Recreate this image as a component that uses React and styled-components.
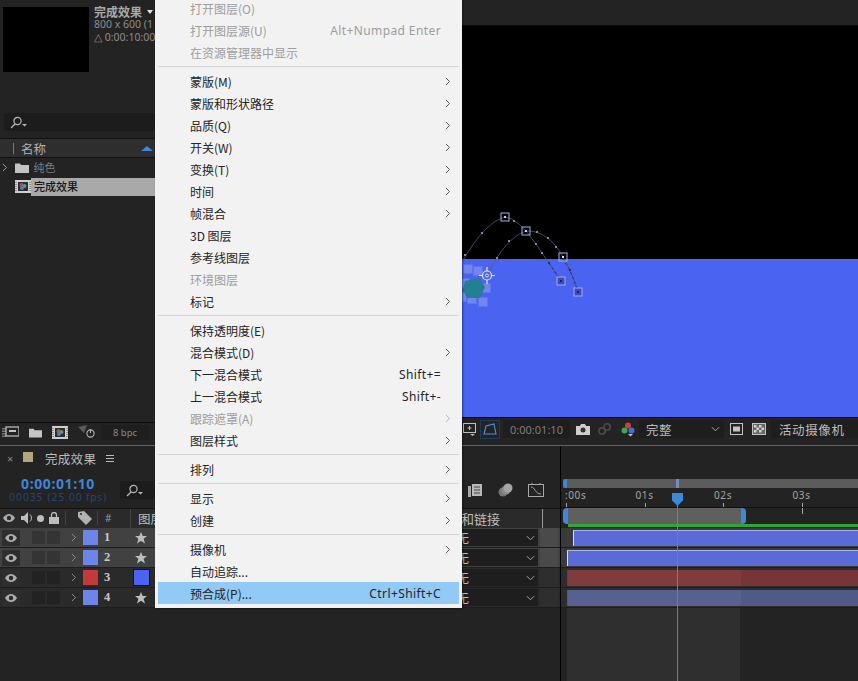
import React from "react";
import styled, { createGlobalStyle } from "styled-components";

const CJK = `"Noto Sans CJK SC", "Noto Sans", sans-serif`;

const MENU_GROUPS = [
  [
    { label: "打开图层(O)", off: true },
    { label: "打开图层源(U)", off: true, keys: "Alt+Numpad Enter" },
    { label: "在资源管理器中显示", off: true },
  ],
  [
    { label: "蒙版(M)", sub: true },
    { label: "蒙版和形状路径", sub: true },
    { label: "品质(Q)", sub: true },
    { label: "开关(W)", sub: true },
    { label: "变换(T)", sub: true },
    { label: "时间", sub: true },
    { label: "帧混合", sub: true },
    { label: "3D 图层" },
    { label: "参考线图层" },
    { label: "环境图层", off: true },
    { label: "标记", sub: true },
  ],
  [
    { label: "保持透明度(E)" },
    { label: "混合模式(D)", sub: true },
    { label: "下一混合模式", keys: "Shift+=" },
    { label: "上一混合模式", keys: "Shift+-" },
    { label: "跟踪遮罩(A)", off: true, sub: true },
    { label: "图层样式", sub: true },
  ],
  [{ label: "排列", sub: true }],
  [
    { label: "显示", sub: true },
    { label: "创建", sub: true },
  ],
  [
    { label: "摄像机", sub: true },
    { label: "自动追踪..." },
    { label: "预合成(P)...", keys: "Ctrl+Shift+C", active: true },
  ],
];

const LAYERS = [
  { n: 1, color: "#6d84e8", selected: true },
  { n: 2, color: "#6d84e8", selected: true },
  { n: 3, color: "#c43a3c", solid: true },
  { n: 4, color: "#6d84e8" },
];

const TRACKS = [
  { inset: 6, tone: "#5a6ad6", rest: "#5a6ad6", lit: true, selected: true },
  { inset: 0, tone: "#5a6ad6", rest: "#5a6ad6", lit: true, selected: true },
  { inset: 0, tone: "#823b3c", rest: "#763536" },
  { inset: 0, tone: "#566190", rest: "#4f5a86" },
];

const HANDLES = [
  [505, 217],
  [526, 231],
  [563, 257],
  [561, 281],
  [578, 292],
];

const PATH_DOTS = [
  [465, 255], [482, 233], [514, 221], [536, 244], [542, 253], [549, 263],
  [497, 258], [509, 241], [537, 232], [548, 238], [556, 247], [570, 270],
];

const SHAPE_HANDLES = [
  [468, 269], [478, 271], [465, 283], [486, 288], [462, 297], [472, 299], [483, 302],
];

function Eye() {
  return (
    <svg width="14" height="10" viewBox="0 0 14 10">
      <path d="M1 5c2-3 4-4 6-4s4 1 6 4c-2 3-4 4-6 4S3 8 1 5z" fill="#adadad" />
      <circle cx="7" cy="5" r="2.2" fill="#2b2b2b" />
    </svg>
  );
}

function Chevron({ color = "#8d8d8d", size = 9 }) {
  return (
    <svg width={size * 0.6} height={size} viewBox="0 0 6 10">
      <path d="M1 1l4 4-4 4" fill="none" stroke={color} strokeWidth="1.1" />
    </svg>
  );
}

function DownChevron() {
  return (
    <svg width="9" height="6" viewBox="0 0 10 6">
      <path d="M1 1l4 4 4-4" fill="none" stroke="#a8a8a8" strokeWidth="1.1" />
    </svg>
  );
}

function SearchIcon() {
  return (
    <svg width="17" height="13" viewBox="0 0 17 13">
      <circle cx="7.5" cy="5" r="3.6" fill="none" stroke="#b8b8b8" strokeWidth="1.2" />
      <path d="M5 8l-4 4" stroke="#b8b8b8" strokeWidth="1.3" />
      <path d="M12 8h5l-2.5 2.5z" fill="#b8b8b8" />
    </svg>
  );
}

function FolderIcon({ w = 14, h = 11 }) {
  return (
    <svg width={w} height={h} viewBox="0 0 14 11">
      <path d="M0 1.5h5l1 1.5h8v8H0z" fill="#c3c3c3" />
    </svg>
  );
}

function CompIcon() {
  return (
    <svg width="16" height="13" viewBox="0 0 16 13">
      <rect width="16" height="13" fill="#cfcfcf" />
      <rect x="3" y="2" width="10" height="9" fill="#2d2d2d" />
      <circle cx="6.5" cy="5" r="2" fill="#b84b4b" />
      <circle cx="9.5" cy="6" r="2" fill="#4fa06a" />
      <circle cx="7" cy="8" r="2" fill="#5b74c9" />
      <path d="M1 2v9M15 2v9" stroke="#555" strokeWidth="1" strokeDasharray="1 1" />
    </svg>
  );
}

function FootageIcon() {
  return (
    <svg width="17" height="12" viewBox="0 0 17 12">
      <rect x="4" y="1" width="13" height="9" fill="none" stroke="#c4c4c4" strokeWidth="1.2" />
      <rect x="7" y="4" width="7" height="2" fill="#c4c4c4" />
      <path d="M1 2v9M3 2v9" stroke="#c4c4c4" strokeDasharray="1.5 1" />
    </svg>
  );
}

function FlowIcon() {
  return (
    <svg width="18" height="14" viewBox="0 0 18 14">
      <path d="M0 2l9-2-3 8z" fill="#5a5a5a" />
      <circle cx="12.5" cy="8.5" r="3.6" fill="none" stroke="#b4b4b4" strokeWidth="1.1" />
      <path d="M12.5 4v4" stroke="#b4b4b4" strokeWidth="1.1" />
    </svg>
  );
}

function CameraIcon() {
  return (
    <svg width="14" height="11" viewBox="0 0 14 11">
      <path d="M0 2h4l1-2h4l1 2h4v9H0z" fill="#cfcfcf" />
      <circle cx="7" cy="6" r="2.5" fill="#333" />
    </svg>
  );
}

function GlassesIcon() {
  return (
    <svg width="13" height="12" viewBox="0 0 13 12">
      <circle cx="4" cy="8" r="3.2" fill="none" stroke="#4b4b4b" strokeWidth="1.6" />
      <circle cx="9" cy="4" r="3.2" fill="none" stroke="#4b4b4b" strokeWidth="1.6" />
    </svg>
  );
}

function ColorIcon() {
  return (
    <svg width="14" height="15" viewBox="0 0 14 15">
      <circle cx="7" cy="3.5" r="3" fill="#d8383a" />
      <circle cx="3.5" cy="8.5" r="3" fill="#3fa84f" />
      <circle cx="10.5" cy="8.5" r="3" fill="#3f6fd8" />
      <path d="M7 12h5l-2.5 2.5z" fill="#c4c4c4" />
    </svg>
  );
}

function MaskIcon() {
  return (
    <svg width="14" height="12" viewBox="0 0 14 12">
      <path d="M1 11l2-8 8-2 2 10z" fill="none" stroke="#4f8fdc" strokeWidth="1.1" />
    </svg>
  );
}

function SafeIcon() {
  return (
    <svg width="13" height="13" viewBox="0 0 13 13">
      <rect x="0.5" y="0.5" width="12" height="9" fill="none" stroke="#c0c0c0" />
      <path d="M6.5 3v4M4.5 5h4" stroke="#c0c0c0" />
      <path d="M7 11h5l-2.5 2z" fill="#c0c0c0" />
    </svg>
  );
}

function RegionIcon() {
  return (
    <svg width="13" height="12" viewBox="0 0 13 12">
      <rect x="0.5" y="0.5" width="12" height="11" fill="none" stroke="#c4c4c4" />
      <rect x="3" y="3.5" width="7" height="5" fill="#c4c4c4" />
    </svg>
  );
}

function CheckerIcon() {
  return (
    <svg width="14" height="12" viewBox="0 0 14 12">
      <rect x="0.5" y="0.5" width="13" height="11" fill="#666" stroke="#c4c4c4" />
      <path d="M2 2h2.5v2.5H2zM7 2h2.5v2.5H7zM4.5 4.5H7V7H4.5zM9.5 4.5H12V7H9.5zM2 7h2.5v2.5H2zM7 7h2.5v2.5H7z" fill="#d4d4d4" />
    </svg>
  );
}

function AudioIcon() {
  return (
    <svg width="12" height="12" viewBox="0 0 12 12">
      <path d="M0 4h3l4-4v12l-4-4H0z" fill="#bdbdbd" />
      <path d="M9 2.5c2 2 2 5 0 7" fill="none" stroke="#bdbdbd" />
    </svg>
  );
}

function LockIcon() {
  return (
    <svg width="10" height="12" viewBox="0 0 10 12">
      <path d="M2.5 5V3a2.5 2.5 0 0 1 5 0v2" fill="none" stroke="#bdbdbd" strokeWidth="1.3" />
      <rect y="5" width="10" height="7" fill="#bdbdbd" />
    </svg>
  );
}

function TagIcon() {
  return (
    <svg width="14" height="14" viewBox="0 0 14 14">
      <path d="M0 1l6-1 8 8-6 6-8-8z" fill="#b2b2b2" />
      <circle cx="3" cy="3" r="1.1" fill="#333" />
    </svg>
  );
}

function Star() {
  return (
    <svg width="12" height="12" viewBox="0 0 12 12">
      <path d="M6 0l1.7 4H12L8.6 6.7 10 11.5 6 8.8 2 11.5l1.4-4.8L0 4h4.3z" fill="#bdbdbd" />
    </svg>
  );
}

function TimelineTools() {
  return (
    <>
      <svg width="14" height="15" viewBox="0 0 14 15">
        <rect x="0" y="3" width="3" height="11" fill="#a8a8a8" />
        <rect x="4" y="1" width="10" height="12" fill="#b8b8b8" />
        <path d="M6 4h6M6 7h6M6 10h6" stroke="#444" />
      </svg>
      <svg width="15" height="14" viewBox="0 0 15 14">
        <circle cx="5" cy="9" r="4.5" fill="#777" />
        <circle cx="8" cy="7" r="4.5" fill="#8c8c8c" />
        <circle cx="10" cy="5" r="4.5" fill="#a5a5a5" />
      </svg>
      <svg width="16" height="14" viewBox="0 0 16 14">
        <rect x="0.5" y="1.5" width="15" height="12" fill="none" stroke="#a8a8a8" />
        <path d="M3 4c4 0 4 7 10 7" fill="none" stroke="#a8a8a8" />
        <path d="M4 0v2M12 0v2" stroke="#a8a8a8" />
      </svg>
    </>
  );
}

function MotionPaths() {
  // coordinates are page pixels, the viewBox starts at the stage corner
  return (
    <PathLayer viewBox="462 26 396 391">
      <path d="M462 262Q485 222 505 217Q518 218 536 244L561 281" fill="none" stroke="#565c6e" strokeWidth="0.8" />
      <path d="M487 276Q505 238 526 231Q548 230 563 257Q572 272 578 292" fill="none" stroke="#565c6e" strokeWidth="0.8" />
      <path d="M549 263L561 281M563 259Q572 272 578 292" fill="none" stroke="#27306e" strokeWidth="1" strokeDasharray="3 2" />
      {PATH_DOTS.map(([x, y]) => (
        <rect key={`${x}-${y}`} x={x - 1} y={y - 1} width="2" height="2" fill={y > 259 ? "#27306e" : "#8089ad"} />
      ))}
      {SHAPE_HANDLES.map(([x, y]) => (
        <rect key={`${x}-${y}`} x={x - 4.5} y={y - 4.5} width="9" height="9" fill="#7386ee" />
      ))}
      <path d="M465 281l14-3 6 9-5 11-13 0-4-8z" fill="#237f92" />
      {HANDLES.map(([x, y]) => (
        <g key={`${x}-${y}`}>
          <rect x={x - 4} y={y - 4} width="8" height="8" fill={y > 259 ? "#3c4cc0" : "none"} stroke="#a4aeea" />
          <rect x={x - 1} y={y - 1} width="2" height="2" fill={y > 259 ? "#1d2350" : "#cdd3f2"} />
        </g>
      ))}
      <circle cx="487" cy="275.5" r="4.5" fill="none" stroke="#e4e6f2" strokeWidth="1.2" />
      <circle cx="487" cy="275.5" r="1.5" fill="none" stroke="#e4e6f2" />
      <path d="M487 267v4M487 280v4M479 275.5h4M491 275.5h4" stroke="#e4e6f2" strokeWidth="1.2" />
    </PathLayer>
  );
}

export default function App() {
  return (
    <Screen>
      <GlobalStyle />
      <TopArea>
        <ProjectPanel>
          <PreviewRow>
            <Thumb />
            <CompInfo>
              <CompTitle>
                完成效果 <TitleCaret />
              </CompTitle>
              <CompMeta>800 x 600 (1</CompMeta>
              <CompMeta>△ 0:00:10:00</CompMeta>
            </CompInfo>
          </PreviewRow>
          <ProjectSearch>
            <SearchIcon />
          </ProjectSearch>
          <ProjectHeader>
            <HeaderDivider />
            <HeaderName>名称</HeaderName>
            <SortCaret />
          </ProjectHeader>
          <ProjectRow>
            <Chevron color="#9a9a9a" />
            <ProjectIcon>
              <FolderIcon />
            </ProjectIcon>
            <ItemName>纯色</ItemName>
          </ProjectRow>
          <ProjectRow>
            <ProjectIcon $shift>
              <CompIcon />
            </ProjectIcon>
            <ItemName $picked>完成效果</ItemName>
          </ProjectRow>
          <ProjectFill />
          <ProjectToolbar>
            <FootageIcon />
            <FolderIcon w={13} h={11} />
            <CompIcon />
            <FlowIcon />
            <DepthBox>8 bpc</DepthBox>
          </ProjectToolbar>
        </ProjectPanel>

        <ViewerPanel>
          <ViewerTab />
          <Stage>
            <StageBlack />
            <StageBlue />
            <MotionPaths />
          </Stage>
          <ViewerToolbar>
            <ToolSlot $left={0}>
              <SafeIcon />
            </ToolSlot>
            <MaskToggle>
              <MaskIcon />
            </MaskToggle>
            <TimeBox>0:00:01:10</TimeBox>
            <ToolSlot $left={6}>
              <CameraIcon />
            </ToolSlot>
            <ToolSlot $left={8}>
              <GlassesIcon />
            </ToolSlot>
            <ToolSlot $left={10}>
              <ColorIcon />
            </ToolSlot>
            <ResolutionBox>
              完整
              <DownChevron />
            </ResolutionBox>
            <ToolSlot $left={6}>
              <RegionIcon />
            </ToolSlot>
            <ToolSlot $left={9}>
              <CheckerIcon />
            </ToolSlot>
            <CameraBox>活动摄像机</CameraBox>
          </ViewerToolbar>
        </ViewerPanel>
      </TopArea>

      <BlueRule />

      <TimelinePanel>
        <LayerSide>
          <TabRow>
            <CloseMark>×</CloseMark>
            <TabSwatch />
            <TabName>完成效果</TabName>
            <TabBurger />
          </TabRow>
          <TimeRow>
            <TimeStack>
              <Timecode>0:00:01:10</Timecode>
              <FrameCount>00035 (25.00 fps)</FrameCount>
            </TimeStack>
            <TimeSearch>
              <SearchIcon />
            </TimeSearch>
            <TimelineToolset>
              <TimelineTools />
            </TimelineToolset>
          </TimeRow>
          <ColumnHeader>
            <SwitchIcons>
              <Eye />
              <AudioIcon />
              <HeaderDot />
              <LockIcon />
            </SwitchIcons>
            <TagCell>
              <TagIcon />
            </TagCell>
            <HashCell>#</HashCell>
            <LayerNameHead>图层名称</LayerNameHead>
            <ParentHead>父级和链接</ParentHead>
          </ColumnHeader>
          {LAYERS.map((layer) => (
            <LayerRow key={layer.n} $selected={layer.selected}>
              <EyeCell>
                <Eye />
              </EyeCell>
              <SoloBox $selected={layer.selected} />
              <SoloBox $selected={layer.selected} />
              <TwirlCell>
                <Chevron color="#8a8a8a" />
              </TwirlCell>
              <LabelChip $color={layer.color} />
              <LayerNumber>{layer.n}</LayerNumber>
              <SourceCell>{layer.solid ? <SolidThumb /> : <Star />}</SourceCell>
              <ParentBox>
                <ParentValue>无</ParentValue>
                <DownChevron />
              </ParentBox>
              <EndCell $selected={layer.selected} />
            </LayerRow>
          ))}
        </LayerSide>

        <TrackSide>
          <NavBar>
            <NavHandle />
            <NavMark />
          </NavBar>
          <Ruler>
            {["00s", "01s", "02s", "03s"].map((t, i) => (
              <RulerCell key={t}>
                <RulerText $first={i === 0}>{i === 0 ? `:${t}` : t}</RulerText>
                <RulerTick $tall={i === 3} />
              </RulerCell>
            ))}
          </Ruler>
          <WorkRow>
            <WorkBar />
          </WorkRow>
          <GreenBar />
          {TRACKS.map((t, i) => (
            <TrackRow key={i} $selected={t.selected}>
              <TrackBar $inset={t.inset} $tone={t.tone} $rest={t.rest} $lit={t.lit} />
            </TrackRow>
          ))}
          <TrackFill>
            <WorkShade />
          </TrackFill>
          <Playhead />
          <PlayheadCap />
        </TrackSide>
      </TimelinePanel>

      <ContextMenu>
        {MENU_GROUPS.map((group, g) => (
          <MenuGroup key={g} $first={g === 0}>
            {group.map((item) => (
              <MenuItem key={item.label} $off={item.off} $active={item.active}>
                <MenuLabel>{item.label}</MenuLabel>
                {item.keys && <MenuKeys>{item.keys}</MenuKeys>}
                <ArrowCell>{item.sub && <Chevron color={item.off ? "#b5b5b5" : "#555"} />}</ArrowCell>
              </MenuItem>
            ))}
          </MenuGroup>
        ))}
      </ContextMenu>
    </Screen>
  );
}

const GlobalStyle = createGlobalStyle`
  html, body {
    margin: 0;
    padding: 0;
    background: #232323;
  }
  * {
    box-sizing: border-box;
  }
`;

const Screen = styled.div`
  position: relative;
  width: 858px;
  height: 681px;
  overflow: hidden;
  background: #232323;
  font-family: ${CJK};
  color: #bdbdbd;
`;

const TopArea = styled.div`
  display: flex;
  height: 445px;
`;

const ProjectPanel = styled.div`
  width: 462px;
  display: flex;
  flex-direction: column;
`;

const PreviewRow = styled.div`
  display: flex;
  height: 113px;
  padding: 7px 0 0 3px;
  gap: 5px;
`;

const Thumb = styled.div`
  width: 86px;
  height: 65px;
  background: #000;
`;

const CompInfo = styled.div`
  width: 63px;
  display: flex;
  flex-direction: column;
  white-space: nowrap;
  margin-top: -2px;
`;

const CompTitle = styled.div`
  display: flex;
  align-items: center;
  gap: 5px;
  font-size: 12px;
  font-weight: 700;
  line-height: 13px;
  color: #a9a9a9;
`;

const TitleCaret = styled.span`
  width: 0;
  height: 0;
  border-left: 3px solid transparent;
  border-right: 3px solid transparent;
  border-top: 4px solid #e4e4e4;
`;

const CompMeta = styled.div`
  font-family: "Noto Sans", sans-serif;
  font-size: 10.5px;
  line-height: 13px;
  color: #8c8c8c;
`;

const ProjectSearch = styled.div`
  height: 18px;
  margin: 0 0 0 4px;
  padding-left: 6px;
  display: flex;
  align-items: center;
  background: #1c1c1c;
`;

const ProjectHeader = styled.div`
  height: 20px;
  margin-top: 7px;
  display: flex;
  align-items: center;
  background: #2e2e2e;
  border-top: 1px solid #111;
  border-bottom: 1px solid #111;
`;

const HeaderDivider = styled.span`
  width: 1px;
  height: 11px;
  margin-left: 13px;
  background: #777;
`;

const HeaderName = styled.span`
  margin-left: 7px;
  font-size: 12.5px;
  color: #b0b0b0;
`;

const SortCaret = styled.span`
  width: 0;
  height: 0;
  margin-left: 95px;
  border-left: 6px solid transparent;
  border-right: 6px solid transparent;
  border-bottom: 5px solid #3f88d8;
`;

const ProjectRow = styled.div`
  height: 19px;
  display: flex;
  align-items: center;
  padding-left: 2px;
`;

const ProjectIcon = styled.span`
  display: flex;
  margin-left: ${(p) => (p.$shift ? "13px" : "8px")};
  width: ${(p) => (p.$shift ? "16px" : "15px")};
`;

const ItemName = styled.span`
  flex: 1;
  height: 18px;
  line-height: 17px;
  padding-left: 3px;
  font-size: 11px;
  background: ${(p) => (p.$picked ? "#a9a9a9" : "transparent")};
  color: ${(p) => (p.$picked ? "#161616" : "#7d7d7d")};
  font-weight: ${(p) => (p.$picked ? 500 : 400)};
`;

const ProjectFill = styled.div`
  flex: 1;
`;

const ProjectToolbar = styled.div`
  height: 19px;
  margin-bottom: 4px;
  padding-left: 2px;
  display: flex;
  align-items: center;
  gap: 10px;
  border-top: 1px solid #0e0e0e;
`;

const DepthBox = styled.div`
  width: 48px;
  height: 15px;
  margin-left: -5px;
  display: flex;
  align-items: center;
  justify-content: center;
  font-family: "Noto Sans", sans-serif;
  font-size: 9.5px;
  color: #8a8a8a;
  background: #1e1e1e;
`;

const ViewerPanel = styled.div`
  flex: 1;
  display: flex;
  flex-direction: column;
`;

const ViewerTab = styled.div`
  height: 26px;
  border-bottom: 1px solid #0c0c0c;
`;

const Stage = styled.div`
  position: relative;
  height: 391px;
  display: flex;
  flex-direction: column;
`;

const StageBlack = styled.div`
  height: 233px;
  background: #000;
`;

const StageBlue = styled.div`
  flex: 1;
  background: #4a63f0;
`;

const PathLayer = styled.svg`
  position: absolute;
  inset: 0;
  width: 396px;
  height: 391px;
`;

const ViewerToolbar = styled.div`
  height: 28px;
  padding: 0 0 5px 1px;
  display: flex;
  align-items: center;
  border-top: 1px solid #0c0c0c;
`;

const ToolSlot = styled.span`
  display: flex;
  flex-shrink: 0;
  margin-left: ${(p) => p.$left}px;
`;

const MaskToggle = styled.span`
  width: 20px;
  height: 19px;
  margin-left: 4px;
  display: flex;
  align-items: center;
  justify-content: center;
  border: 1px solid #1d3a5c;
`;

const TimeBox = styled.div`
  width: 67px;
  height: 18px;
  margin-left: 3px;
  display: flex;
  align-items: center;
  justify-content: center;
  background: #1e1e1e;
  font-family: "Noto Sans", sans-serif;
  font-size: 11px;
  color: #7d7d7d;
`;

const ResolutionBox = styled.div`
  width: 85px;
  height: 18px;
  margin-left: 4px;
  padding: 0 4px 0 7px;
  display: flex;
  align-items: center;
  justify-content: space-between;
  background: #1e1e1e;
  font-size: 12.5px;
  letter-spacing: 0.5px;
  color: #bdbdbd;
`;

const CameraBox = styled.div`
  flex: 1;
  height: 18px;
  margin-left: 5px;
  padding-left: 8px;
  display: flex;
  align-items: center;
  background: #1e1e1e;
  font-size: 12.5px;
  letter-spacing: 0.6px;
  color: #bdbdbd;
  white-space: nowrap;
`;

const BlueRule = styled.div`
  height: 1px;
  background: #3b6c9e;
`;

const TimelinePanel = styled.div`
  display: flex;
  height: 235px;
`;

const LayerSide = styled.div`
  width: 560px;
  flex-shrink: 0;
  display: flex;
  flex-direction: column;
`;

const TabRow = styled.div`
  height: 26px;
  padding: 0 0 2px 7px;
  display: flex;
  align-items: center;
`;

const CloseMark = styled.span`
  width: 16px;
  font-family: "Noto Sans", sans-serif;
  font-size: 11px;
  color: #8a8a8a;
`;

const TabSwatch = styled.span`
  width: 10px;
  height: 10px;
  margin-top: -2px;
  background: #b3a57c;
`;

const TabName = styled.span`
  margin-left: 12px;
  font-size: 12.5px;
  letter-spacing: 0.3px;
  color: #bcbcbc;
`;

const TabBurger = styled.span`
  width: 8px;
  height: 7px;
  margin-left: 10px;
  border-top: 1px solid #bdbdbd;
  border-bottom: 1px solid #bdbdbd;
  background: linear-gradient(#bdbdbd, #bdbdbd) center / 100% 1px no-repeat;
`;

const TimeRow = styled.div`
  height: 36px;
  display: flex;
  align-items: center;
`;

const TimeStack = styled.div`
  width: 120px;
  display: flex;
  flex-direction: column;
  align-items: center;
  padding-right: 4px;
`;

const Timecode = styled.div`
  font-family: "Noto Sans", sans-serif;
  font-size: 14px;
  font-weight: 700;
  letter-spacing: 0.6px;
  line-height: 15px;
  color: #3d85d6;
`;

const FrameCount = styled.div`
  font-family: "DejaVu Sans", sans-serif;
  font-size: 10px;
  letter-spacing: 0.5px;
  line-height: 14px;
  white-space: nowrap;
  color: #24456d;
`;

const TimeSearch = styled.div`
  width: 36px;
  height: 18px;
  padding-left: 6px;
  display: flex;
  align-items: center;
  background: #1c1c1c;
`;

const TimelineToolset = styled.div`
  margin-left: auto;
  width: 92px;
  padding: 0 16px 0 0;
  display: flex;
  align-items: center;
  justify-content: space-between;
`;

const ColumnHeader = styled.div`
  height: 20px;
  padding-bottom: 1px;
  display: flex;
  align-items: center;
  background: #2a2a2a;
  border-top: 1px solid #111;
`;

const SwitchIcons = styled.div`
  width: 65px;
  padding: 0 6px 0 2px;
  display: flex;
  align-items: center;
  justify-content: space-between;
`;

const HeaderDot = styled.span`
  width: 7px;
  height: 7px;
  border-radius: 50%;
  background: #bdbdbd;
`;

const TagCell = styled.div`
  width: 32px;
  padding-left: 12px;
  display: flex;
  border-left: 1px solid #444;
`;

const HashCell = styled.div`
  width: 33px;
  padding-left: 7px;
  font-family: "Noto Sans", sans-serif;
  font-size: 10px;
  color: #999;
  border-left: 1px solid #444;
`;

const LayerNameHead = styled.div`
  width: 305px;
  padding-left: 7px;
  font-size: 12.5px;
  color: #bdbdbd;
  white-space: nowrap;
  border-left: 1px solid #444;
`;

const ParentHead = styled.div`
  width: 108px;
  font-size: 13px;
  color: #bdbdbd;
  white-space: nowrap;
  border-right: 1px solid #999;
`;

const LayerRow = styled.div`
  height: 20px;
  display: flex;
  align-items: center;
  background: ${(p) => (p.$selected ? "#414141" : "#2a2a2a")};
  border-bottom: 1px solid #1d1d1d;
`;

const EyeCell = styled.div`
  width: 18px;
  height: 16px;
  margin: 0 12px 0 2px;
  display: flex;
  align-items: center;
  justify-content: center;
  background: #2e2e2e;
`;

const SoloBox = styled.div`
  width: 13px;
  height: 13px;
  margin-right: 2px;
  background: ${(p) => (p.$selected ? "#343434" : "#222")};
`;

const TwirlCell = styled.div`
  width: 21px;
  padding-left: 9px;
  display: flex;
`;

const LabelChip = styled.div`
  width: 15px;
  height: 15px;
  background: ${(p) => p.$color};
`;

const LayerNumber = styled.div`
  width: 29px;
  padding-left: 6px;
  font-family: "Liberation Serif", serif;
  font-size: 12.5px;
  font-weight: 700;
  color: #c9c9c9;
`;

const SourceCell = styled.div`
  width: 24px;
  padding-left: 8px;
  display: flex;
  align-items: center;
`;

const SolidThumb = styled.div`
  width: 17px;
  height: 17px;
  margin-left: -2px;
  flex-shrink: 0;
  background: #4a63f0;
  border: 1px solid #0f1330;
`;

const ParentBox = styled.div`
  width: 90px;
  height: 17px;
  margin-left: 297px;
  padding: 0 3px 0 0;
  display: flex;
  align-items: center;
  justify-content: space-between;
  background: #1e1e1e;
`;

const ParentValue = styled.span`
  margin-left: 9px;
  font-size: 12px;
  color: #bdbdbd;
`;

const EndCell = styled.div`
  width: 18px;
  height: 19px;
  margin-left: 2px;
  background: ${(p) => (p.$selected ? "#4a4a4a" : "#2e2e2e")};
`;

const TrackSide = styled.div`
  position: relative;
  width: 298px;
  min-width: 0;
  display: flex;
  flex-direction: column;
  border-left: 1px solid #000;
`;

const NavBar = styled.div`
  position: relative;
  height: 9px;
  margin: 33px 0 0 2px;
  background: #5c5c5c;
`;

const NavHandle = styled.span`
  position: absolute;
  left: 0;
  top: 0;
  width: 4px;
  height: 9px;
  border-radius: 4px 0 0 4px;
  background: #3f88d8;
`;

const NavMark = styled.span`
  position: absolute;
  left: 113px;
  top: 0;
  width: 3px;
  height: 9px;
  background: #6f8fb5;
`;

const Ruler = styled.div`
  height: 19px;
  display: flex;
  padding-left: 5px;
`;

const RulerCell = styled.div`
  width: 78.5px;
  flex-shrink: 0;
  display: flex;
  flex-direction: column;
  height: 26px;
`;

const RulerText = styled.span`
  height: 15px;
  transform: translateX(${(p) => (p.$first ? "-1px" : "-9px")});
  display: block;
  white-space: nowrap;
  font-family: "Noto Sans", sans-serif;
  font-size: 10px;
  letter-spacing: 0.6px;
  line-height: 15px;
  color: #a5a5a5;
`;

const RulerTick = styled.span`
  width: 1px;
  height: ${(p) => (p.$tall ? "11px" : "5px")};
  background: #a5a5a5;
`;

const WorkRow = styled.div`
  height: 17px;
  padding: 0 112px 0 2px;
  border-top: 1px solid #111;
`;

const WorkBar = styled.div`
  height: 100%;
  background: #5f5f5f;
  border-left: 5px solid #3f88d8;
  border-right: 5px solid #3f88d8;
  border-radius: 4px;
`;

const GreenBar = styled.div`
  height: 4px;
  margin-left: 7px;
  padding-bottom: 1px;
  background: #2fa63a content-box;
`;

const TrackRow = styled.div`
  height: 20px;
  padding: 2px 0 1px 6px;
  background: ${(p) => (p.$selected ? "#3a3a3a" : "#2d2d2d")};
  border-bottom: 1px solid #1d1d1d;
`;

const TrackBar = styled.div`
  height: 100%;
  margin-left: ${(p) => p.$inset}px;
  background: linear-gradient(to right, ${(p) => p.$tone} 173px, ${(p) => p.$rest} 173px);
  border-top: 1px solid ${(p) => (p.$lit ? "#aab4ee" : "transparent")};
  border-left: 1px solid ${(p) => (p.$lit ? "#d6daf5" : "transparent")};
`;

const TrackFill = styled.div`
  flex: 1;
  display: flex;
  padding-left: 6px;
  background: #232323;
`;

const WorkShade = styled.div`
  width: 173px;
  background: #2f2f2f;
`;

const Playhead = styled.span`
  position: absolute;
  left: 116px;
  top: 52px;
  bottom: 0;
  width: 1px;
  background: #2f8cff;
`;

const PlayheadCap = styled.span`
  position: absolute;
  left: 111px;
  top: 47px;
  width: 11px;
  height: 13px;
  background: #3f88d8;
  clip-path: polygon(0 0, 100% 0, 100% 55%, 50% 100%, 0 55%);
`;

const ContextMenu = styled.div`
  position: absolute;
  left: 155px;
  top: -5px;
  width: 307px;
  padding: 2px 3px 4px;
  background: #f2f2f2;
  box-shadow: 1px 1px 2px rgba(0, 0, 0, 0.4);
`;

const MenuGroup = styled.div`
  ${(p) =>
    !p.$first &&
    `
    margin-top: 3px;
    padding-top: 3px;
    border-top: 1px solid #d4d4d4;
  `}
`;

const MenuItem = styled.div`
  height: 22px;
  padding-left: 32px;
  display: flex;
  align-items: center;
  font-size: 12px;
  color: ${(p) => (p.$off ? "#9d9d9d" : "#242424")};
  background: ${(p) => (p.$active ? "#91c9f7" : "transparent")};
`;

const MenuLabel = styled.span`
  flex: 1;
  white-space: nowrap;
`;

const MenuKeys = styled.span`
  font-family: "Noto Sans", sans-serif;
  font-size: 12px;
  letter-spacing: 0.4px;
`;

const ArrowCell = styled.span`
  width: 18px;
  padding-left: 4px;
  display: flex;
  align-items: center;
`;
